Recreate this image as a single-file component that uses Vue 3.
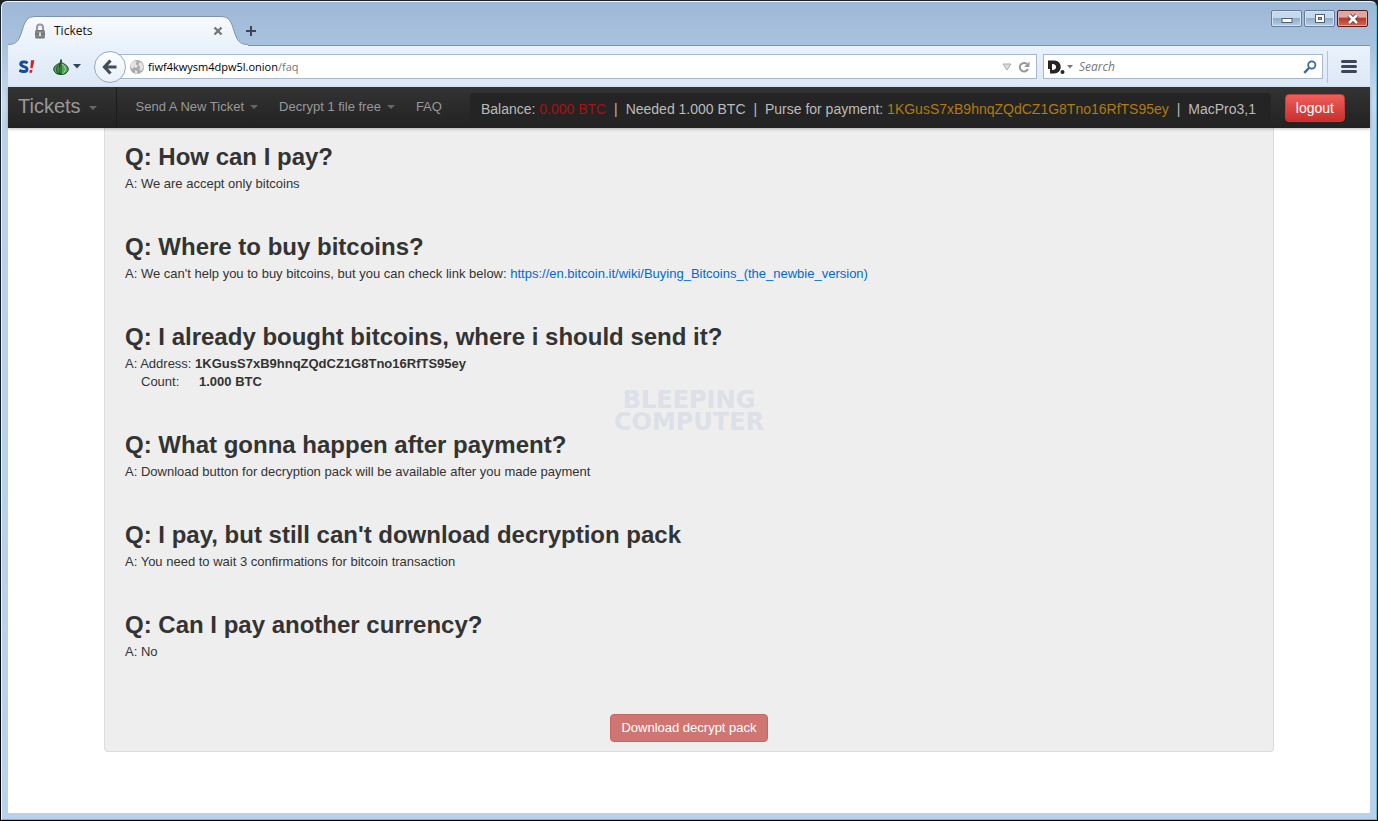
<template>
  <div class="desktop">
    <div class="window">
      <header class="titlebar">
        <div class="tab">
          <svg class="tab-shape" viewBox="0 0 240 30" width="240" height="30" aria-hidden="true">
            <defs>
              <linearGradient id="tabFill" x1="0" y1="0" x2="0" y2="1">
                <stop offset="0" stop-color="#f8fafd" />
                <stop offset="1" stop-color="#eaf2fb" />
              </linearGradient>
            </defs>
            <path d="M0 28.500C9 28.500 11 24 14 15C17 5 19 .5 28 .5H212C221 .5 223 5 226 15C229 24 231 28.500 240 28.500V30H0Z" fill="url(#tabFill)" />
            <path d="M0 28.500C9 28.500 11 24 14 15C17 5 19 .5 28 .5H212C221 .5 223 5 226 15C229 24 231 28.500 240 28.500" fill="none" stroke="#8193ac" />
          </svg>
          <svg class="lock" viewBox="0 0 12 16" width="12" height="16" aria-hidden="true">
            <path d="M3 8V4.500C3 .5 9 .5 9 4.500V8" fill="none" stroke="#999" stroke-width="2" />
            <rect x="1" y="7" width="10" height="8.500" rx="1.500" fill="#777" />
            <path d="M1 9h10M1 13h10" stroke="#999" />
            <path d="M5 9.500h2V13H5z" fill="#ddd" />
          </svg>
          <span class="tab-title">Tickets</span>
          <button class="plain tab-close" type="button" aria-label="Close tab">
            <svg viewBox="0 0 10 10" width="10" height="10"><path d="M1.500 1.500l7 7M8.500 1.500l-7 7" stroke="#777" stroke-width="2.400" /></svg>
          </button>
        </div>
        <button class="plain new-tab" type="button" aria-label="New tab">
          <svg viewBox="0 0 12 12" width="12" height="12"><path d="M6 1v10M1 6h10" stroke="#3b4656" stroke-width="2" /></svg>
        </button>
        <div class="controls">
          <button class="control" type="button" aria-label="Minimize">
            <svg viewBox="0 0 14 12" width="14" height="12"><rect x="2" y="5.500" width="10" height="4" fill="#fff" stroke="#53606f" /></svg>
          </button>
          <button class="control" type="button" aria-label="Restore">
            <svg viewBox="0 0 14 12" width="14" height="12"><rect x="2.500" y="1.500" width="9" height="8" fill="#fff" stroke="#53606f" /><rect x="5.500" y="4.500" width="3" height="2" fill="#8fa9c7" stroke="#53606f" /></svg>
          </button>
          <button class="control close" type="button" aria-label="Close">
            <svg viewBox="0 0 14 12" width="14" height="12"><path d="M3 2l8 8M11 2l-8 8" stroke="#5b3a3c" stroke-width="4.400" /><path d="M3 2l8 8M11 2l-8 8" stroke="#fff" stroke-width="2.600" /></svg>
          </button>
        </div>
      </header>

      <div class="toolbar">
        <button class="plain" type="button" aria-label="NoScript">
          <svg viewBox="1 1 14 13" width="16" height="15">
            <path d="M8.500 4.500C6.500 3 2.500 3 2.500 5.400C2.500 8.200 8 7 8 9.800C8 12.600 3.500 12.200 1.300 10.800" fill="none" stroke="#174a98" stroke-width="2.600" />
            <path d="M11.500 2h3l-1.600 7h-2zM10.500 10.500h2.300l-.5 2.500h-2.300z" fill="#e21a22" />
          </svg>
        </button>
        <button class="plain onion" type="button" aria-label="Torbutton">
          <svg viewBox="0 0 16 16" width="16" height="16">
            <path d="M8 .5L8.600 3.500C11 5 15.200 6.500 15.200 10C15.200 13.500 12 15.500 8 15.500S.8 13.500 .8 10C.8 6.500 5.500 5 7.400 3.500Z" fill="#55a85b" stroke="#174020" />
            <path d="M8 4C3 7 2.500 11 5.500 15M8 4V15M8 4C5.500 8 5.500 12 7 15" fill="none" stroke="#163b1c" />
            <path d="M8.500 5C13 7 13.500 11 10 14.500" fill="none" stroke="#9bd79b" />
          </svg>
          <svg viewBox="0 0 8 5" width="8" height="5"><path d="M0 0h8L4 4.500z" fill="#34455c" /></svg>
        </button>
        <button class="back" type="button" aria-label="Back">
          <svg viewBox="0 0 16 16" width="16" height="16"><path d="M8.500 1.500L2.500 8l6 6.500M3 8h11.500" fill="none" stroke="#414d5b" stroke-width="3.200" /></svg>
        </button>
        <form class="location" @submit.prevent>
          <svg class="globe" viewBox="0 0 16 16" width="16" height="16" aria-hidden="true">
            <circle cx="8" cy="8" r="7" fill="#a9a9a9" />
            <path d="M2 4.500L5 2l3 .5L6.500 5 9 7 7 9 5 8 3.500 10 1.500 8zM10 3l3 1 1.500 4-2 4-2-1 .5-3-1.500-2zM6 11l2.500 1L8 15 6 14z" fill="#e3e3e3" />
          </svg>
          <input v-model="host" class="host" type="text" aria-label="Address" />
          <span class="path">/faq</span>
          <button class="plain history" type="button" aria-label="Show history">
            <svg viewBox="0 0 10 8" width="10" height="8"><path d="M1 1h8L5 7z" fill="#ddd" stroke="#aaa" /></svg>
          </button>
          <button class="plain" type="button" aria-label="Reload">
            <svg viewBox="0 0 12 12" width="12" height="12"><path d="M9 3A4.300 4.300 0 1 0 10 8" fill="none" stroke="#989898" stroke-width="2" /><path d="M11.500 .5v5.500H6z" fill="#989898" /></svg>
          </button>
        </form>
        <form class="search" @submit.prevent>
          <svg viewBox="0 0 18 14" width="18" height="14" aria-hidden="true">
            <path d="M1 .5H7C16 .5 16 13.500 7 13.500H3V9H1ZM5 4V10C10.500 10.500 10.500 3.500 5 4Z" fill="#252525" fill-rule="evenodd" />
            <circle cx="15.500" cy="12" r="2" fill="#252525" />
          </svg>
          <svg class="engine-caret" viewBox="0 0 6 4" width="6" height="4" aria-hidden="true"><path d="M0 0h6L3 3.500z" fill="#777" /></svg>
          <input v-model="query" type="text" placeholder="Search" aria-label="Search" />
          <button class="plain" type="submit" aria-label="Go">
            <svg viewBox="0 0 14 14" width="14" height="14"><circle cx="8.800" cy="5" r="3.600" fill="none" stroke="#376a9d" stroke-width="1.800" /><path d="M6 8L1.200 12.800" stroke="#376a9d" stroke-width="2.400" /></svg>
          </button>
        </form>
        <button class="plain menu" type="button" aria-label="Open menu">
          <svg viewBox="0 0 16 13" width="16" height="13"><path d="M1.500 1.500h13M1.500 6.500h13M1.500 11.500h13" stroke="#3c4656" stroke-width="3" stroke-linecap="round" /></svg>
        </button>
      </div>

      <div class="page">
        <nav class="navbar">
          <a class="brand" href="#">Tickets<i class="caret"></i></a>
          <div class="links">
            <a v-for="item in links" :key="item.label" href="#">{{ item.label }}<i v-if="item.menu" class="caret"></i></a>
          </div>
          <p class="status">
            Balance: <span class="balance">0.000 BTC</span> <span class="bar">|</span> Needed 1.000 BTC <span class="bar">|</span> Purse for payment:
            <span class="purse">{{ address }}</span> <span class="bar">|</span> MacPro3,1
          </p>
          <button class="logout" type="button">logout</button>
        </nav>

        <main class="well">
          <section v-for="item in faq" :key="item.q">
            <h2>Q: {{ item.q }}</h2>
            <p>A: {{ item.a }} <a v-if="item.link" :href="item.link">{{ item.link }}</a></p>
          </section>
          <section class="send">
            <h2>Q: I already bought bitcoins, where i should send it?</h2>
            <p>A: Address: <b>{{ address }}</b></p>
            <p class="count"><span>Count:</span><b>1.000 BTC</b></p>
          </section>
          <section v-for="item in faqAfter" :key="item.q">
            <h2>Q: {{ item.q }}</h2>
            <p>A: {{ item.a }}</p>
          </section>
          <button class="download" type="button" disabled>Download decrypt pack</button>
        </main>
      </div>
    </div>
    <div class="watermark">BLEEPING<br>COMPUTER</div>
  </div>
</template>

<script setup>
import { ref } from "vue";

const host = ref("fiwf4kwysm4dpw5l.onion");
const query = ref("");
const address = "1KGusS7xB9hnqZQdCZ1G8Tno16RfTS95ey";

const links = [
    { label: "Send A New Ticket", menu: true },
    { label: "Decrypt 1 file free", menu: true },
    { label: "FAQ" }
];

const faq = [
    { q: "How can I pay?", a: "We are accept only bitcoins" },
    {
        q: "Where to buy bitcoins?",
        a: "We can't help you to buy bitcoins, but you can check link below:",
        link: "https://en.bitcoin.it/wiki/Buying_Bitcoins_(the_newbie_version)"
    }
];

const faqAfter = [
    { q: "What gonna happen after payment?", a: "Download button for decryption pack will be available after you made payment" },
    { q: "I pay, but still can't download decryption pack", a: "You need to wait 3 confirmations for bitcoin transaction" },
    { q: "Can I pay another currency?", a: "No" }
];
</script>

<style>
body {
    margin: 0;
    background: #0b1a22;
}
</style>

<style scoped>
* {
    box-sizing: border-box;
}

.desktop {
    position: relative;
    display: flex;
    min-height: 100vh;
    padding: 1px;
    background: linear-gradient(#1b2129, #0b2028 60%, #000);
    font-family: "Liberation Sans", Arial, sans-serif;
    font-size: 13px;
    line-height: 18px;
    color: #333;
}

.window {
    flex: 1;
    min-width: 0;
    display: flex;
    flex-direction: column;
    padding: 0 6px 6px;
    border: 1px solid #4fc3dc;
    border-top-color: #f4f8fc;
    border-left-color: #eef5fb;
    border-radius: 6px 6px 0 0;
    background: linear-gradient(#9db8d6, #a9c2de 44px, #c8daee 100px, #b9d1ea 130px);
}

button,
input {
    font: inherit;
    color: inherit;
}

svg {
    display: block;
}

.plain {
    display: flex;
    align-items: center;
    padding: 0;
    border: 0;
    background: none;
}

.titlebar {
    display: flex;
    align-items: flex-end;
    height: 44px;
    border-bottom: 1px solid #8193ac;
    font-family: "Open Sans", "Noto Sans", sans-serif;
    font-size: 12px;
    color: #111;
}

.tab {
    position: relative;
    display: flex;
    align-items: center;
    width: 240px;
    height: 30px;
    padding: 0 25px 0 26px;
    margin-bottom: -1px;
}

.tab-shape {
    position: absolute;
    inset: 0;
}

.lock,
.tab-title,
.tab-close {
    position: relative;
}

.tab-title {
    flex: 1;
    margin-left: 8px;
}

.new-tab {
    height: 28px;
    margin-left: -3px;
}

.controls {
    display: flex;
    gap: 2px;
    align-self: flex-start;
    margin: 8px 2px 0 auto;
}

.control {
    display: flex;
    align-items: center;
    justify-content: center;
    width: 31px;
    height: 17px;
    padding: 0;
    border: 1px solid #647d9b;
    border-radius: 2px;
    background: linear-gradient(#c6d8eb 45%, #91adcb 50%, #b5cee8);
    box-shadow: inset 0 0 0 1px #d6e4f2;
}

.control.close {
    border-color: #571b20;
    background: linear-gradient(#e0a79e 40%, #b93a2c 50%, #d36a50);
    box-shadow: inset 0 0 0 1px #e4a99f;
}

.toolbar {
    display: flex;
    align-items: center;
    height: 41px;
    padding-left: 11px;
    background: linear-gradient(#eaf2fb, #dbe8f6);
    font-family: "Open Sans", "Noto Sans", sans-serif;
    font-size: 12px;
}

.onion {
    gap: 4px;
    margin: 0 13px 0 18px;
}

.location,
.search {
    display: flex;
    align-items: center;
    height: 25px;
    border: 1px solid #a5b8cf;
    background: #fff;
}

.location {
    flex: 1;
    min-width: 0;
    padding: 0 6px 0 11px;
    border-left: 0;
    font-size: 11px;
}

.back {
    position: relative;
    display: flex;
    flex: none;
    align-items: center;
    justify-content: center;
    width: 32px;
    height: 32px;
    margin-right: -8px;
    padding: 0;
    border: 1px solid #95a9c2;
    border-radius: 50%;
    background: linear-gradient(#fdfeff, #e8f0f9);
}

.globe {
    flex: none;
    margin-right: 3px;
}

.location input,
.search input {
    min-width: 0;
    padding: 0;
    border: 0;
    outline: 0;
    background: none;
}

.host {
    field-sizing: content;
    color: #000;
}

.path {
    color: #777;
}

.history {
    margin: 0 6px 0 auto;
}

.search {
    width: 280px;
    margin: 0 4px 0 6px;
    padding: 0 5px 0 3px;
}

.engine-caret {
    margin: 0 6px 0 2px;
}

.search input {
    flex: 1;
}

.search input::placeholder {
    color: #777;
    font-style: italic;
    opacity: 1;
}

.menu {
    height: 32px;
    padding: 0 13px;
    border-left: 1px solid #b3c3d6;
}

.page {
    flex: 1;
    background: #fff;
}

.navbar {
    position: relative;
    display: flex;
    align-items: center;
    height: 41px;
    padding-right: 25px;
    background: linear-gradient(#333, #222);
    box-shadow: 0 1px 3px rgba(0, 0, 0, 0.25);
    color: #999;
    white-space: nowrap;
}

.navbar a {
    color: inherit;
    text-decoration: none;
}

.brand {
    padding: 0 19px 2px 10px;
    border-right: 1px solid #1c1c1c;
    font-size: 20px;
    line-height: 39px;
}

.links {
    display: flex;
    gap: 21px;
    padding: 0 28px 2px 19px;
}

.caret {
    display: inline-block;
    margin-left: 6px;
    border: 4px solid transparent;
    border-top-color: #666;
    border-bottom: 0;
    vertical-align: middle;
}

.brand .caret {
    margin-left: 8px;
}

.status {
    flex: 1;
    margin: 0 14px 0 0;
    padding: 5px 11px 3px;
    border-radius: 4px;
    background: #242424;
    color: #bbb;
    font-size: 14px;
    line-height: 22px;
}

.bar {
    margin: 0 4px;
}

.balance {
    color: #a51214;
}

.purse {
    color: #b07a12;
}

.logout {
    height: 28px;
    padding: 0 10px;
    border: 1px solid #c43c35;
    border-radius: 4px;
    background: linear-gradient(#ee5f5b, #c9302c);
    color: #fff;
    font-size: 14px;
}

.well {
    max-width: 1170px;
    margin: 0 auto;
    padding: 11px 20px 9px;
    border: 1px solid #dcdcdc;
    border-top: 0;
    border-radius: 0 0 4px 4px;
    background: #eee;
}

section {
    margin-bottom: 36px;
}

h2 {
    margin: 0;
    font-size: 24px;
    line-height: 36px;
}

p {
    margin: 0;
}

.well a {
    color: #0069d6;
    text-decoration: none;
}

.count {
    display: flex;
    padding-left: 16px;
}

.count span {
    width: 58px;
}

.download {
    display: block;
    height: 28px;
    margin: 53px auto 0;
    padding: 0 10px;
    border: 1px solid #c96561;
    border-radius: 4px;
    background: #d07672;
    color: #fff;
}

section:last-of-type {
    margin-bottom: 0;
}

.watermark {
    position: absolute;
    top: 50%;
    left: 50%;
    transform: translate(-50%, -50%);
    color: #dddfe9;
    font-family: "DejaVu Sans", sans-serif;
    font-size: 24px;
    font-weight: bold;
    line-height: 22px;
    text-align: center;
    pointer-events: none;
}
</style>
